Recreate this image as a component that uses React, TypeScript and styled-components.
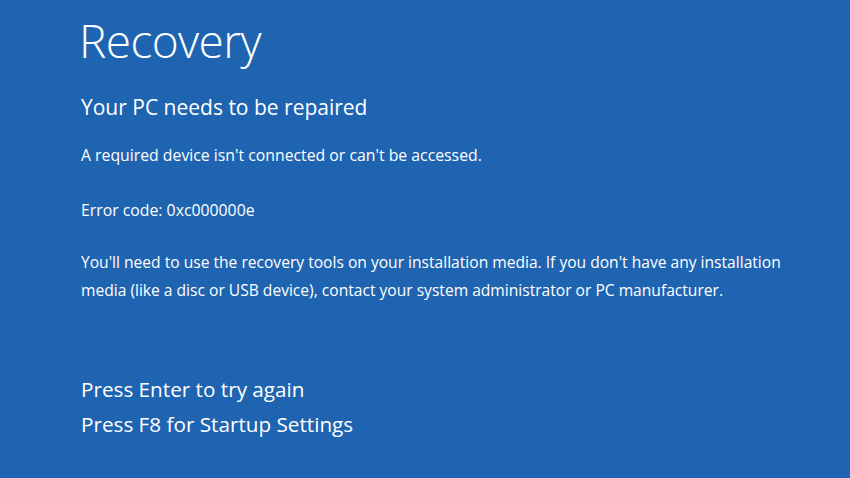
import React from "react";
import styled, { createGlobalStyle } from "styled-components";

const Global = createGlobalStyle`
  html, body { margin: 0; padding: 0; background: #1f64b1; }
  body { font-family: "Open Sans", "Noto Sans", sans-serif; color: #ffffff; }
`;

const Screen = styled.div`
  width: 850px;
  height: 478px;
  background: #1f64b1;
  box-sizing: border-box;
  padding: 11px 0 0 79px;
  display: flex;
  flex-direction: column;
  overflow: hidden;
`;

const Title = styled.h1`
  margin: 0;
  font-weight: 300;
  font-size: 46px;
  line-height: 58px;
  letter-spacing: -0.6px;
`;

const Subtitle = styled.h2`
  margin: 24px 0 0 2px;
  font-weight: 400;
  font-size: 21px;
  line-height: 28px;
`;

const Text = styled.p<{ $gap: number; $size: number }>`
  margin: ${(p) => p.$gap}px 0 0 2px;
  font-size: ${(p) => p.$size}px;
  line-height: 28px;
  font-weight: 400;
`;

const Actions = styled.div`
  margin: 68px 0 0 2px;
  display: flex;
  flex-direction: column;
`;

const Action = styled.div`
  font-size: 20.7px;
  line-height: 35px;
`;

export default function App() {
  return (
    <>
      <Global />
      <Screen>
        <Title>Recovery</Title>
        <Subtitle>Your PC needs to be repaired</Subtitle>
        <Text $gap={20} $size={15.8}>A required device isn't connected or can't be accessed.</Text>
        <Text $gap={27} $size={15.8}>Error code: 0xc000000e</Text>
        <Text $gap={24} $size={15.6}>
          You'll need to use the recovery tools on your installation media. If you don't have any installation
          <br />
          media (like a disc or USB device), contact your system administrator or PC manufacturer.
        </Text>
        <Actions>
          <Action>Press Enter to try again</Action>
          <Action>Press F8 for Startup Settings</Action>
        </Actions>
      </Screen>
    </>
  );
}
